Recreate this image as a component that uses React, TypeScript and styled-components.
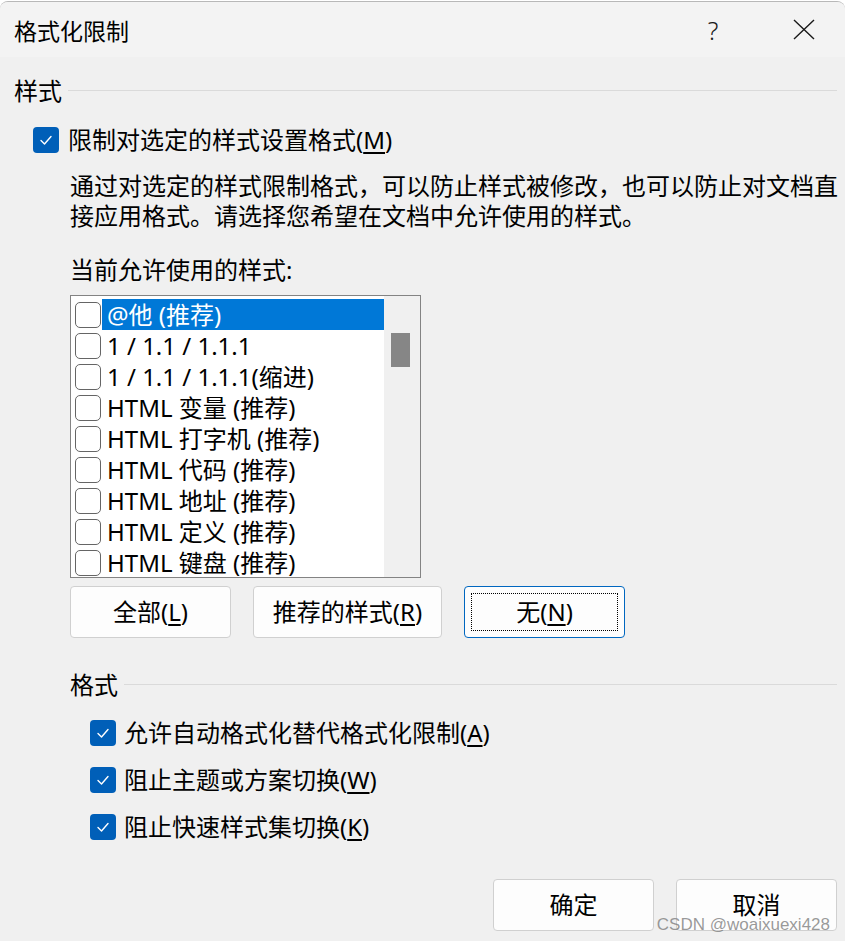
import React from "react";
import styled, { createGlobalStyle } from "styled-components";

const GlobalStyle = createGlobalStyle`
  html, body { margin: 0; padding: 0; background: #ffffff; }
  body {
    font-family: "Noto Sans", "Noto Sans CJK SC", sans-serif;
    color: #000;
  }
  u { text-decoration-thickness: 1.5px; text-underline-offset: 3px; }
`;

const Dialog = styled.div`
  position: relative;
  width: 845px;
  height: 940px;
  margin-top: 1px;
  background: #f0f0f0;
  border-top: 1px solid #b8b8b8;
  border-radius: 8px 8px 0 0;
  overflow: hidden;
  display: flex;
  flex-direction: column;
  box-sizing: border-box;
`;

const TitleBar = styled.div`
  height: 55px;
  flex: none;
  background: #f3f3f3;
  display: flex;
  align-items: center;
  padding-left: 14px;
  padding-right: 18px;
`;

const Title = styled.div`
  flex: 1;
  font-size: 23px;
  line-height: 30px;
  font-family: "Noto Sans CJK SC", sans-serif;
`;

const TitleButton = styled.div`
  width: 46px;
  height: 40px;
  display: flex;
  align-items: center;
  justify-content: center;
  font-size: 25px;
  font-weight: 300;
  color: #1a1a1a;
  & + & { margin-left: 45px; }
`;

const Body = styled.div`
  flex: 1;
  display: flex;
  flex-direction: column;
  padding: 19px 8px 0 14px;
`;

const GroupHeader = styled.div<{ $indent?: number; $top?: number }>`
  display: flex;
  align-items: center;
  gap: 6px;
  height: 30px;
  font-size: 24px;
  line-height: 30px;
  margin-left: ${(p) => p.$indent ?? 0}px;
  margin-top: ${(p) => p.$top ?? 0}px;
  &::after {
    content: "";
    flex: 1;
    height: 1px;
    background: #dadada;
    margin-top: -2px;
  }
`;

const CheckRow = styled.label<{ $indent: number; $top: number; $gap: number }>`
  display: flex;
  align-items: center;
  gap: ${(p) => p.$gap}px;
  height: 30px;
  font-size: 24px;
  line-height: 30px;
  margin-left: ${(p) => p.$indent}px;
  margin-top: ${(p) => p.$top}px;
`;

const BlueBox = styled.span`
  width: 26px;
  height: 26px;
  flex: none;
  border-radius: 4px;
  background: #005fb8;
  display: flex;
  align-items: center;
  justify-content: center;
`;

const Description = styled.div`
  margin-left: 56px;
  margin-right: -10px;
  margin-top: 16px;
  font-size: 24px;
  line-height: 30px;
  white-space: nowrap;
`;

const ListLabel = styled.div`
  margin-left: 56px;
  margin-top: 24px;
  font-size: 24px;
  line-height: 30px;
`;

const ListBox = styled.div`
  margin-left: 56px;
  margin-top: 10px;
  width: 351px;
  height: 283px;
  box-sizing: border-box;
  border: 1px solid #838383;
  display: flex;
`;

const ListItems = styled.div`
  flex: 1;
  background: #ffffff;
  padding: 3px 0 0 4px;
  overflow: hidden;
`;

const ListRow = styled.div`
  height: 31px;
  display: flex;
  align-items: center;
`;

const ItemBox = styled.span`
  width: 24px;
  height: 24px;
  flex: none;
  border: 1.5px solid #656565;
  border-radius: 5px;
  background: #fff;
`;

const ItemText = styled.span<{ $selected?: boolean }>`
  flex: 1;
  height: 31px;
  line-height: 31px;
  margin-left: 1px;
  padding-left: 5px;
  font-size: 24px;
  white-space: nowrap;
  background: ${(p) => (p.$selected ? "#0078d7" : "transparent")};
  color: ${(p) => (p.$selected ? "#ffffff" : "#000000")};
`;

const ScrollTrack = styled.div`
  width: 36px;
  flex: none;
  background: #f0f0f0;
  padding: 37px 0 0 7px;
  box-sizing: border-box;
`;

const ScrollThumb = styled.div`
  width: 19px;
  height: 34px;
  background: #868686;
`;

const ButtonRow = styled.div<{ $indent: number; $top: number; $justify?: string }>`
  display: flex;
  gap: 22px;
  margin-left: ${(p) => p.$indent}px;
  margin-top: ${(p) => p.$top}px;
  justify-content: ${(p) => p.$justify ?? "flex-start"};
`;

const Button = styled.div<{ $width: number; $focused?: boolean }>`
  position: relative;
  width: ${(p) => p.$width}px;
  height: 52px;
  box-sizing: border-box;
  border: ${(p) => (p.$focused ? "1.5px solid #0067c0" : "1px solid #d0d0d0")};
  border-radius: 4px;
  background: #fdfdfd;
  display: flex;
  align-items: center;
  justify-content: center;
  font-size: 24px;
  line-height: 30px;
  &::after {
    content: "";
    display: ${(p) => (p.$focused ? "block" : "none")};
    position: absolute;
    inset: 6px 6px 6px 6px;
    border: 1px dotted #000;
  }
`;

const Watermark = styled.div`
  position: absolute;
  right: 15px;
  bottom: 6px;
  font-family: "Liberation Sans", Arial, sans-serif;
  font-size: 17px;
  line-height: 20px;
  color: rgba(120, 120, 120, 0.75);
  pointer-events: none;
`;

const Check = () => (
  <svg width="16" height="16" viewBox="0 0 16 16">
    <polyline
      points="3,8.5 6.5,12 13,4.5"
      fill="none"
      stroke="#ffffff"
      strokeWidth="1.4"
      strokeLinecap="round"
      strokeLinejoin="round"
    />
  </svg>
);

const CloseIcon = () => (
  <svg width="22" height="22" viewBox="0 0 22 22">
    <path d="M1 1 L21 20 M21 1 L1 20" stroke="#1a1a1a" strokeWidth="1.4" fill="none" />
  </svg>
);

const items = [
  "@他 (推荐)",
  "1 / 1.1 / 1.1.1",
  "1 / 1.1 / 1.1.1(缩进)",
  "HTML 变量 (推荐)",
  "HTML 打字机 (推荐)",
  "HTML 代码 (推荐)",
  "HTML 地址 (推荐)",
  "HTML 定义 (推荐)",
  "HTML 键盘 (推荐)",
];

export default function App() {
  return (
    <>
      <GlobalStyle />
      <Dialog>
        <TitleBar>
          <Title>格式化限制</Title>
          <TitleButton>?</TitleButton>
          <TitleButton>
            <CloseIcon />
          </TitleButton>
        </TitleBar>
        <Body>
          <GroupHeader>样式</GroupHeader>
          <CheckRow $indent={19} $top={19} $gap={9}>
            <BlueBox>
              <Check />
            </BlueBox>
            <span>
              限制对选定的样式设置格式(<u>M</u>)
            </span>
          </CheckRow>
          <Description>
            通过对选定的样式限制格式，可以防止样式被修改，也可以防止对文档直
            <br />
            接应用格式。请选择您希望在文档中允许使用的样式。
          </Description>
          <ListLabel>当前允许使用的样式:</ListLabel>
          <ListBox>
            <ListItems>
              {items.map((t, i) => (
                <ListRow key={t}>
                  <ItemBox />
                  <ItemText $selected={i === 0}>{t}</ItemText>
                </ListRow>
              ))}
            </ListItems>
            <ScrollTrack>
              <ScrollThumb />
            </ScrollTrack>
          </ListBox>
          <ButtonRow $indent={56} $top={8}>
            <Button $width={161}>
              全部(<u>L</u>)
            </Button>
            <Button $width={189}>
              推荐的样式(<u>R</u>)
            </Button>
            <Button $width={161} $focused>
              无(<u>N</u>)
            </Button>
          </ButtonRow>
          <GroupHeader $indent={56} $top={32}>
            格式
          </GroupHeader>
          <CheckRow $indent={76} $top={18} $gap={8}>
            <BlueBox>
              <Check />
            </BlueBox>
            <span>
              允许自动格式化替代格式化限制(<u>A</u>)
            </span>
          </CheckRow>
          <CheckRow $indent={76} $top={17} $gap={8}>
            <BlueBox>
              <Check />
            </BlueBox>
            <span>
              阻止主题或方案切换(<u>W</u>)
            </span>
          </CheckRow>
          <CheckRow $indent={76} $top={17} $gap={8}>
            <BlueBox>
              <Check />
            </BlueBox>
            <span>
              阻止快速样式集切换(<u>K</u>)
            </span>
          </CheckRow>
          <ButtonRow $indent={0} $top={37} $justify="flex-end">
            <Button $width={161}>确定</Button>
            <Button $width={161}>取消</Button>
          </ButtonRow>
        </Body>
        <Watermark>CSDN @woaixuexi428</Watermark>
      </Dialog>
    </>
  );
}
